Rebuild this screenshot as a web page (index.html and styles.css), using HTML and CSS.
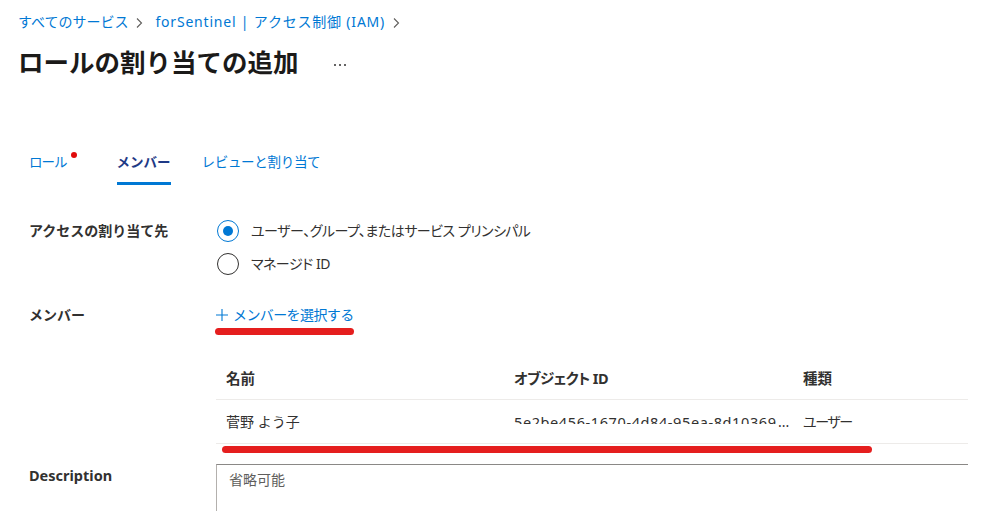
FILE: index.html
```html
<!DOCTYPE html>
<html lang="ja">
<head>
<meta charset="utf-8">
<title>ロールの割り当ての追加</title>
<link rel="stylesheet" href="styles.css">
</head>
<body>
<div class="page">
  <nav class="crumbs">
    <a class="crumb">すべてのサービス</a>
    <svg class="chev" viewBox="0 0 8 12" width="8" height="12"><path d="M2 1.5 L6.5 6 L2 10.5" fill="none" stroke="#605e5c" stroke-width="1.1"/></svg>
    <a class="crumb crumb-2">forSentinel | アクセス制御 (IAM)</a>
    <svg class="chev" viewBox="0 0 8 12" width="8" height="12"><path d="M2 1.5 L6.5 6 L2 10.5" fill="none" stroke="#605e5c" stroke-width="1.1"/></svg>
  </nav>
  <div class="titlebar">
    <h1 class="title">ロールの割り当ての追加</h1>
    <svg class="more" viewBox="0 0 14 4" width="14" height="4"><circle cx="2" cy="2" r="1" fill="#323130"/><circle cx="7" cy="2" r="1" fill="#323130"/><circle cx="12" cy="2" r="1" fill="#323130"/></svg>
  </div>

  <div class="tabs">
    <div class="tab tab-role">ロール<span class="dot"></span></div>
    <div class="tab active">メンバー</div>
    <div class="tab">レビューと割り当て</div>
  </div>

  <div class="form">
    <div class="label">アクセスの割り当て先</div>
    <div class="radios">
      <div class="radio-opt"><span class="radio checked"></span><span class="prop">ユーザー、グループ、またはサービス プリンシパル</span></div>
      <div class="radio-opt"><span class="radio"></span><span class="prop">マネージド ID</span></div>
    </div>

    <div class="label members-label">メンバー</div>
    <div class="members">
      <a class="select-link">
        <svg class="plus" viewBox="0 0 12 12" width="12" height="12"><path d="M6 0 V12 M0 6 H12" stroke="#0078d4" stroke-width="1.1" fill="none"/></svg>
        <span class="select-text">メンバーを選択する</span>
      </a>
      <span class="mark mark-1"></span>
    </div>

    <div class="spacer"></div>
    <div class="table-wrap">
      <div class="table">
        <div class="tr th">
          <div class="c c1">名前</div>
          <div class="c c2 prop hid">オブジェクト ID</div>
          <div class="c c3">種類</div>
        </div>
        <div class="tr td">
          <div class="c c1">菅野 よう子</div>
          <div class="c c2 idcell"><span class="idclip"><span class="idtext">5e2be456-1670-4d84-95ea-8d10369</span></span><span class="ell">...</span></div>
          <div class="c c3 prop utype">ユーザー</div>
        </div>
      </div>
      <span class="mark mark-2"></span>
    </div>

    <div class="label desc-label">Description</div>
    <div class="textarea">省略可能</div>
  </div>
</div>
</body>
</html>
```

FILE: styles.css
```css
* { box-sizing: border-box; }
html, body { margin: 0; padding: 0; background: #ffffff; }
body {
  font-family: "Noto Sans", "Noto Sans CJK JP", sans-serif;
  font-size: 14px;
  color: #323130;
  overflow: hidden;
  height: 511px;
}
.page { padding: 12px 0 0 18px; }

.prop { font-feature-settings: "palt"; }

.crumbs {
  display: flex;
  align-items: center;
  height: 20px;
  line-height: 20px;
}
.crumb { color: #0078d4; font-size: 14px; text-decoration: none; }
.crumb-2 { letter-spacing: 0.8px; }
.chev { display: block; margin: 1px 12px 0 7px; }

.titlebar {
  display: flex;
  align-items: center;
  margin-top: 14px;
  height: 32px;
}
.title {
  margin: 0;
  font-size: 25.5px;
  font-weight: 700;
  line-height: 32px;
  color: #1b1a19;
}
.more { margin: 6px 0 0 34px; display: block; }

.tabs {
  display: flex;
  margin-top: 72px;
  padding-left: 11px;
}
.tab {
  position: relative;
  color: #0078d4;
  font-size: 13.5px;
  line-height: 24px;
  padding-bottom: 8px;
  border-bottom: 3px solid transparent;
  margin-right: 31px;
  letter-spacing: -0.3px;
}
.tab-role { margin-right: 50px; letter-spacing: -1px; }
.tab.active {
  color: #1f3a86;
  font-weight: 700;
  border-bottom-color: #0078d4;
  letter-spacing: 0;
}
.dot {
  position: absolute;
  right: -10px;
  top: 2px;
  width: 6px;
  height: 6px;
  border-radius: 50%;
  background: #e00b0b;
}

.form {
  display: grid;
  grid-template-columns: 187px 752px;
  margin-top: 29px;
  padding-left: 11px;
}
.label {
  font-weight: 700;
  font-size: 14px;
  line-height: 33px;
  color: #323130;
}
.radios { display: flex; flex-direction: column; }
.radio-opt {
  display: flex;
  align-items: center;
  gap: 12px;
  height: 33px;
  line-height: 20px;
}
.radio-opt .prop { font-size: 14px; letter-spacing: -0.5px; }
.radio {
  width: 22px;
  height: 22px;
  border-radius: 50%;
  border: 1px solid #323130;
  display: block;
  flex: none;
  position: relative;
  margin-left: 1px;
  background: #fff;
}
.radio.checked { border-color: #0078d4; }
.radio.checked::after {
  content: "";
  position: absolute;
  left: 5px; top: 5px;
  width: 10px; height: 10px;
  border-radius: 50%;
  background: #0078d4;
}

.members-label { margin-top: 18px; }
.members { margin-top: 18px; position: relative; height: 33px; }
.select-link {
  display: flex;
  align-items: center;
  gap: 5px;
  color: #0078d4;
  line-height: 33px;
  height: 33px;
}
.select-text { letter-spacing: -0.6px; }
.plus { display: block; }

.mark {
  position: absolute;
  background: #e51e1e;
  border-radius: 4px;
  height: 7px;
  z-index: 2;
}
.mark-1 { left: -1px; top: 30px; width: 139px; }
.mark-2 { left: 6px; top: 86px; width: 650px; }

.spacer { height: 1px; }
.table-wrap { position: relative; margin-top: 29px; }
.table { width: 752px; }
.tr {
  display: grid;
  grid-template-columns: 288px 289px 175px;
  border-bottom: 1px solid #edebe9;
}
.c { padding: 0 10px; line-height: 20px; white-space: nowrap; overflow: hidden; }
.th .c { padding-top: 8px; padding-bottom: 11px; font-weight: 700; font-size: 14.5px; }
.th .hid { letter-spacing: -0.6px; }
.td .c { padding-top: 12px; padding-bottom: 11px; }
.td .utype { letter-spacing: -1.4px; }
.idcell { display: flex; align-items: flex-start; }
.idclip {
  display: block;
  height: 7px;
  overflow: hidden;
  margin-top: 5px;
  width: 264px;
  flex: none;
}
.idtext {
  display: block;
  line-height: 14px;
  margin-top: -2px;
  font-size: 14.5px;
  letter-spacing: 0.6px;
}
.ell { line-height: 20px; }

.desc-label { margin-top: 19px; line-height: 20px; padding-top: 2px; font-size: 14.5px; }
.textarea {
  margin-top: 20px;
  height: 80px;
  width: 752px;
  border: 1px solid #8a8886;
  border-left-color: #b3b0ad;
  border-right: none;
  padding: 5px 12px;
  line-height: 20px;
  color: #605e5c;
}
```
